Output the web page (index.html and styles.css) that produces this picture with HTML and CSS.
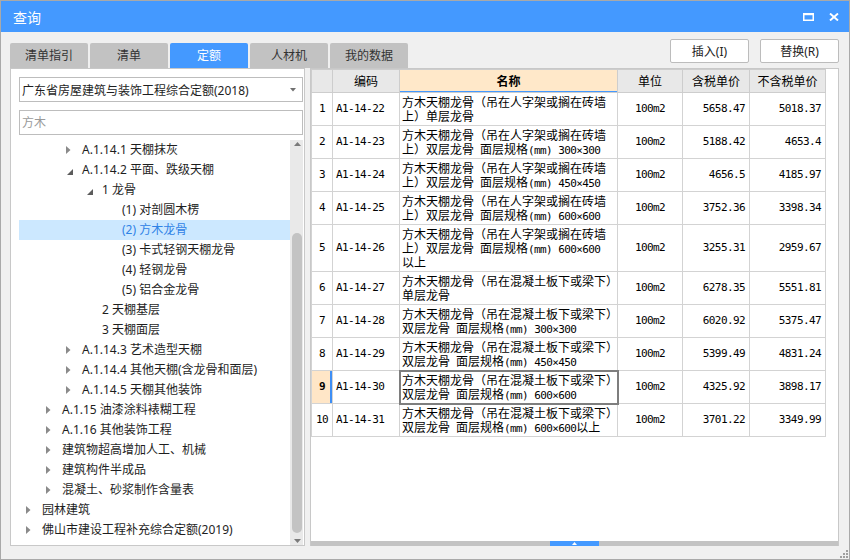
FILE: index.html
```html
<!DOCTYPE html>
<html lang="zh-CN">
<head>
<meta charset="utf-8">
<title>查询</title>
<link rel="stylesheet" href="styles.css">
</head>
<body>
<div class="win">
  <div class="titlebar">
    <span class="title">查询</span>
    <div class="winbtns">
      <svg class="wb" width="11" height="8" viewBox="0 0 11 8"><rect x="0.75" y="1" width="9.5" height="6.25" fill="none" stroke="#fff" stroke-width="1.5"/><rect x="0" y="0" width="11" height="2.2" fill="#fff"/></svg>
      <svg class="wb" width="10" height="8" viewBox="0 0 10 8"><path d="M1 0.5 L9 7.5 M9 0.5 L1 7.5" stroke="#fff" stroke-width="1.9"/></svg>
    </div>
  </div>

  <div class="toolbar">
    <div class="tabs">
      <div class="tab">清单指引</div>
      <div class="tab">清单</div>
      <div class="tab active">定额</div>
      <div class="tab">人材机</div>
      <div class="tab">我的数据</div>
    </div>
    <div class="actions">
      <button class="btn">插入(I)</button>
      <button class="btn">替换(R)</button>
    </div>
  </div>

  <div class="main">
    <div class="left">
      <div class="select">
        <span>广东省房屋建筑与装饰工程综合定额(2018)</span>
        <svg width="6" height="4" viewBox="0 0 6 4"><path d="M0 0 H6 L3 3.5Z" fill="#707070"/></svg>
      </div>
      <input class="search" type="text" placeholder="方木">
      <div class="treewrap">
        <ul class="tree">
          <li class="node l2"><span class="tw"><svg class="col" width="5" height="8" viewBox="0 0 5 8"><path d="M0 0 L4.5 4 L0 8Z"/></svg></span><span class="lbl">A.1.14.1 天棚抹灰</span></li>
          <li class="node l2"><span class="tw"><svg class="exp" width="6" height="6" viewBox="0 0 6 6"><path d="M6 0 V6 H0Z"/></svg></span><span class="lbl">A.1.14.2 平面、跌级天棚</span></li>
          <li class="node l3"><span class="tw"><svg class="exp" width="6" height="6" viewBox="0 0 6 6"><path d="M6 0 V6 H0Z"/></svg></span><span class="lbl">1 龙骨</span></li>
          <li class="node l4"><span class="tw"></span><span class="lbl">(1) 对剖圆木楞</span></li>
          <li class="node l4 sel"><span class="tw"></span><span class="lbl">(2) 方木龙骨</span></li>
          <li class="node l4"><span class="tw"></span><span class="lbl">(3) 卡式轻钢天棚龙骨</span></li>
          <li class="node l4"><span class="tw"></span><span class="lbl">(4) 轻钢龙骨</span></li>
          <li class="node l4"><span class="tw"></span><span class="lbl">(5) 铝合金龙骨</span></li>
          <li class="node l3"><span class="tw"></span><span class="lbl">2 天棚基层</span></li>
          <li class="node l3"><span class="tw"></span><span class="lbl">3 天棚面层</span></li>
          <li class="node l2"><span class="tw"><svg class="col" width="5" height="8" viewBox="0 0 5 8"><path d="M0 0 L4.5 4 L0 8Z"/></svg></span><span class="lbl">A.1.14.3 艺术造型天棚</span></li>
          <li class="node l2"><span class="tw"><svg class="col" width="5" height="8" viewBox="0 0 5 8"><path d="M0 0 L4.5 4 L0 8Z"/></svg></span><span class="lbl">A.1.14.4 其他天棚(含龙骨和面层)</span></li>
          <li class="node l2"><span class="tw"><svg class="col" width="5" height="8" viewBox="0 0 5 8"><path d="M0 0 L4.5 4 L0 8Z"/></svg></span><span class="lbl">A.1.14.5 天棚其他装饰</span></li>
          <li class="node l1"><span class="tw"><svg class="col" width="5" height="8" viewBox="0 0 5 8"><path d="M0 0 L4.5 4 L0 8Z"/></svg></span><span class="lbl">A.1.15 油漆涂料裱糊工程</span></li>
          <li class="node l1"><span class="tw"><svg class="col" width="5" height="8" viewBox="0 0 5 8"><path d="M0 0 L4.5 4 L0 8Z"/></svg></span><span class="lbl">A.1.16 其他装饰工程</span></li>
          <li class="node l1"><span class="tw"><svg class="col" width="5" height="8" viewBox="0 0 5 8"><path d="M0 0 L4.5 4 L0 8Z"/></svg></span><span class="lbl">建筑物超高增加人工、机械</span></li>
          <li class="node l1"><span class="tw"><svg class="col" width="5" height="8" viewBox="0 0 5 8"><path d="M0 0 L4.5 4 L0 8Z"/></svg></span><span class="lbl">建筑构件半成品</span></li>
          <li class="node l1"><span class="tw"><svg class="col" width="5" height="8" viewBox="0 0 5 8"><path d="M0 0 L4.5 4 L0 8Z"/></svg></span><span class="lbl">混凝土、砂浆制作含量表</span></li>
          <li class="node l0"><span class="tw"><svg class="col" width="5" height="8" viewBox="0 0 5 8"><path d="M0 0 L4.5 4 L0 8Z"/></svg></span><span class="lbl">园林建筑</span></li>
          <li class="node l0"><span class="tw"><svg class="col" width="5" height="8" viewBox="0 0 5 8"><path d="M0 0 L4.5 4 L0 8Z"/></svg></span><span class="lbl">佛山市建设工程补充综合定额(2019)</span></li>
        </ul>
        <div class="vscroll">
          <div class="sb-btn up"><svg width="7" height="4" viewBox="0 0 7 4"><path d="M0 4 L3.5 0 L7 4Z" fill="#7a7a7a"/></svg></div>
          <div class="sb-track"><div class="sb-thumb"></div></div>
          <div class="sb-btn down"><svg width="7" height="4" viewBox="0 0 7 4"><path d="M0 0 L3.5 4 L7 0Z" fill="#7a7a7a"/></svg></div>
        </div>
      </div>
    </div>

    <div class="right">
      <div class="grid">
        <table>
          <colgroup>
            <col class="c-no"><col class="c-code"><col class="c-name"><col class="c-unit"><col class="c-price"><col class="c-price2">
          </colgroup>
          <thead>
            <tr><th></th><th>编码</th><th class="hsel">名称</th><th>单位</th><th>含税单价</th><th>不含税单价</th></tr>
          </thead>
          <tbody>
            <tr><td class="no">1</td><td class="mono">A1-14-22</td><td class="name">方木天棚龙骨（吊在人字架或搁在砖墙<br>上）单层龙骨</td><td class="mono ctr">100m2</td><td class="mono num">5658.47</td><td class="mono num">5018.37</td></tr>
            <tr><td class="no">2</td><td class="mono">A1-14-23</td><td class="name">方木天棚龙骨（吊在人字架或搁在砖墙<br>上）双层龙骨&ensp;面层规格<span class="mono">(mm) 300×300</span></td><td class="mono ctr">100m2</td><td class="mono num">5188.42</td><td class="mono num">4653.4</td></tr>
            <tr><td class="no">3</td><td class="mono">A1-14-24</td><td class="name">方木天棚龙骨（吊在人字架或搁在砖墙<br>上）双层龙骨&ensp;面层规格<span class="mono">(mm) 450×450</span></td><td class="mono ctr">100m2</td><td class="mono num">4656.5</td><td class="mono num">4185.97</td></tr>
            <tr><td class="no">4</td><td class="mono">A1-14-25</td><td class="name">方木天棚龙骨（吊在人字架或搁在砖墙<br>上）双层龙骨&ensp;面层规格<span class="mono">(mm) 600×600</span></td><td class="mono ctr">100m2</td><td class="mono num">3752.36</td><td class="mono num">3398.34</td></tr>
            <tr><td class="no">5</td><td class="mono">A1-14-26</td><td class="name">方木天棚龙骨（吊在人字架或搁在砖墙<br>上）双层龙骨&ensp;面层规格<span class="mono">(mm) 600×600</span><br>以上</td><td class="mono ctr">100m2</td><td class="mono num">3255.31</td><td class="mono num">2959.67</td></tr>
            <tr><td class="no">6</td><td class="mono">A1-14-27</td><td class="name">方木天棚龙骨（吊在混凝土板下或梁下）<br>单层龙骨</td><td class="mono ctr">100m2</td><td class="mono num">6278.35</td><td class="mono num">5551.81</td></tr>
            <tr><td class="no">7</td><td class="mono">A1-14-28</td><td class="name">方木天棚龙骨（吊在混凝土板下或梁下）<br>双层龙骨&ensp;面层规格<span class="mono">(mm) 300×300</span></td><td class="mono ctr">100m2</td><td class="mono num">6020.92</td><td class="mono num">5375.47</td></tr>
            <tr><td class="no">8</td><td class="mono">A1-14-29</td><td class="name">方木天棚龙骨（吊在混凝土板下或梁下）<br>双层龙骨&ensp;面层规格<span class="mono">(mm) 450×450</span></td><td class="mono ctr">100m2</td><td class="mono num">5399.49</td><td class="mono num">4831.24</td></tr>
            <tr class="cur"><td class="no">9</td><td class="mono">A1-14-30</td><td class="name focus">方木天棚龙骨（吊在混凝土板下或梁下）<br>双层龙骨&ensp;面层规格<span class="mono">(mm) 600×600</span></td><td class="mono ctr">100m2</td><td class="mono num">4325.92</td><td class="mono num">3898.17</td></tr>
            <tr><td class="no">10</td><td class="mono">A1-14-31</td><td class="name">方木天棚龙骨（吊在混凝土板下或梁下）<br>双层龙骨&ensp;面层规格<span class="mono">(mm) 600×600</span>以上</td><td class="mono ctr">100m2</td><td class="mono num">3701.22</td><td class="mono num">3349.99</td></tr>
          </tbody>
        </table>
      </div>
      <div class="hscroll">
        <div class="hs-handle"><svg width="5" height="3" viewBox="0 0 5 3"><path d="M0 3 L2.5 0 L5 3Z" fill="#fff"/></svg></div>
      </div>
    </div>
  </div>

  <div class="statusbar">
    <svg class="grip" width="10" height="10" viewBox="0 0 10 10">
      <rect x="8" y="2" width="2" height="2" fill="#a0a0a0"/>
      <rect x="5" y="5" width="2" height="2" fill="#a0a0a0"/>
      <rect x="8" y="5" width="2" height="2" fill="#a0a0a0"/>
      <rect x="2" y="8" width="2" height="2" fill="#a0a0a0"/>
      <rect x="5" y="8" width="2" height="2" fill="#a0a0a0"/>
      <rect x="8" y="8" width="2" height="2" fill="#a0a0a0"/>
    </svg>
  </div>
</div>
</body>
</html>
```

FILE: styles.css
```css
* { box-sizing: border-box; }
html, body { margin: 0; padding: 0; }
body {
  font-family: "Noto Sans", "Noto Sans CJK SC", sans-serif;
  font-size: 12px;
  color: #1e1e1e;
  background: #ffffff;
}

.win {
  width: 850px;
  height: 560px;
  border: 1px solid #a9a9a9;
  background: #f0f0f0;
  display: flex;
  flex-direction: column;
}

/* title bar */
.titlebar {
  height: 31px;
  flex: none;
  background: #4499ff;
  color: #fff;
  display: flex;
  align-items: center;
  justify-content: space-between;
  padding: 0 10px 0 12px;
}
.title { font-size: 14px; line-height: 16px; margin-top: 3px; }
.winbtns { display: flex; align-items: center; gap: 15px; margin-top: 1px; }
.wb { display: block; }

/* toolbar */
.toolbar {
  height: 36px;
  flex: none;
  display: flex;
  justify-content: space-between;
  padding: 0 10px 0 9px;
}
.tabs { display: flex; gap: 2px; align-self: flex-end; }
.tab {
  width: 78px;
  height: 25px;
  background: #c2c2c2;
  border-radius: 2px 2px 0 0;
  text-align: center;
  line-height: 25px;
  color: #333;
}
.tab.active { background: #4499ff; color: #fff; }
.actions { display: flex; gap: 11px; padding-top: 7px; }
.btn {
  width: 79px;
  height: 24px;
  padding: 0;
  background: #fff;
  border: 1px solid #bcbcbc;
  border-radius: 2px;
  font: inherit;
  color: #222;
}

/* main area */
.main {
  height: 478px;
  flex: none;
  display: flex;
  gap: 5px;
  padding: 0 10px 0 9px;
}
.left {
  width: 295px;
  flex: none;
  background: #fff;
  border: 1px solid #c8c8c8;
  padding: 8px 1px 0 8px;
  display: flex;
  flex-direction: column;
}
.select {
  height: 25px;
  flex: none;
  border: 1px solid #bdbdbd;
  display: flex;
  align-items: center;
  justify-content: space-between;
  padding: 0 6px 0 2px;
  white-space: nowrap;
}
.search {
  display: block;
  width: 100%;
  height: 25px;
  flex: none;
  margin: 8px 0 0;
  border: 1px solid #bdbdbd;
  border-radius: 0;
  padding: 0 2px;
  font: inherit;
  color: #333;
  outline: none;
  background: #fff;
}
.search::placeholder { color: #9a9a9a; }

.treewrap { margin-top: 5px; flex: 1; display: flex; min-height: 0; }
.tree { flex: 1; list-style: none; margin: 0; padding: 0; }
.node {
  height: 20px;
  display: flex;
  align-items: center;
  white-space: nowrap;
  line-height: 20px;
}
.node.l0 { padding-left: 0; }
.node.l1 { padding-left: 20px; }
.node.l2 { padding-left: 40px; }
.node.l3 { padding-left: 60px; }
.node.l4 { padding-left: 80px; }
.tw {
  width: 23px;
  height: 20px;
  flex: none;
  display: flex;
  align-items: center;
  padding-left: 7px;
}
.tw .col { fill: #8a8a8a; }
.tw .exp { fill: #5c5c5c; margin-top: 4px; margin-left: 1px; }
.lbl { color: #1e1e1e; }
.node.sel { background: #cce8ff; }
.node.sel .lbl { color: #2f82e6; }

.vscroll {
  width: 13px;
  flex: none;
  background: #e9e9e9;
  display: flex;
  flex-direction: column;
}
.sb-btn { height: 12px; flex: none; display: flex; justify-content: center; }
.sb-btn.up { align-items: flex-start; padding-top: 2px; padding-left: 1px; }
.sb-btn.down { align-items: flex-end; padding-bottom: 2px; padding-left: 1px; }
.sb-track { flex: 1; display: flex; flex-direction: column; padding: 81px 1px 0 2px; }
.sb-thumb { flex: 1; background: #c3c3c3; border-radius: 5px; }

/* right grid */
.right {
  flex: 1;
  background: #fff;
  border: 1px solid #c8c8c8;
  border-bottom: none;
  display: flex;
  flex-direction: column;
}
.grid { flex: 1; }
table {
  border-collapse: collapse;
  table-layout: fixed;
  width: 514px;
  font-family: "Noto Sans CJK SC", "Noto Sans", sans-serif;
  font-size: 12px;
  color: #000;
}
.c-no { width: 21px; }
.c-code { width: 67px; }
.c-name { width: 218px; }
.c-unit { width: 65px; }
.c-price { width: 67px; }
.c-price2 { width: 76px; }

th, td {
  border: 1px solid #d3d3d3;
  padding: 2px 3px;
  line-height: 14px;
  white-space: nowrap;
  overflow: hidden;
}
th {
  background: #e8e8e8;
  border-color: #cdcdcd;
  font-weight: normal;
  line-height: 16px;
  padding: 3px 2px;
  text-align: center;
}
th.hsel {
  background: #ffe8c9;
  font-weight: bold;
  box-shadow: inset 0 -1px 0 #4499ff;
}
td { vertical-align: middle; }
td.name { padding: 2px 2px 2px 2px; }
td.no {
  text-align: center;
  padding: 0;
  font-family: "DejaVu Sans Mono", monospace;
  font-size: 11px;
  letter-spacing: -0.6px;
}
.mono {
  font-family: "DejaVu Sans Mono", monospace;
  font-size: 11px;
  letter-spacing: -0.6px;
}
.name .mono { line-height: 10px; }
.ctr { text-align: center; }
.num { text-align: right; padding-right: 4px; }
tr.cur td.no {
  background: #ffe6c7;
  font-weight: bold;
  box-shadow: inset -2px 0 0 #3d8ef5;
}
td.focus { outline: 2px solid #7e7e7e; outline-offset: -1px; }

.hscroll {
  height: 5px;
  flex: none;
  background: #c3c3c3;
  display: flex;
  justify-content: center;
}
.hs-handle {
  width: 49px;
  height: 5px;
  background: #4499ff;
  display: flex;
  justify-content: center;
  align-items: flex-start;
  padding-top: 1px;
}
.hs-handle svg { display: block; }

/* bottom */
.statusbar {
  flex: 1;
  display: flex;
  justify-content: flex-end;
  align-items: flex-end;
  padding: 0 1px 1px 0;
}
.grip { display: block; }
```
